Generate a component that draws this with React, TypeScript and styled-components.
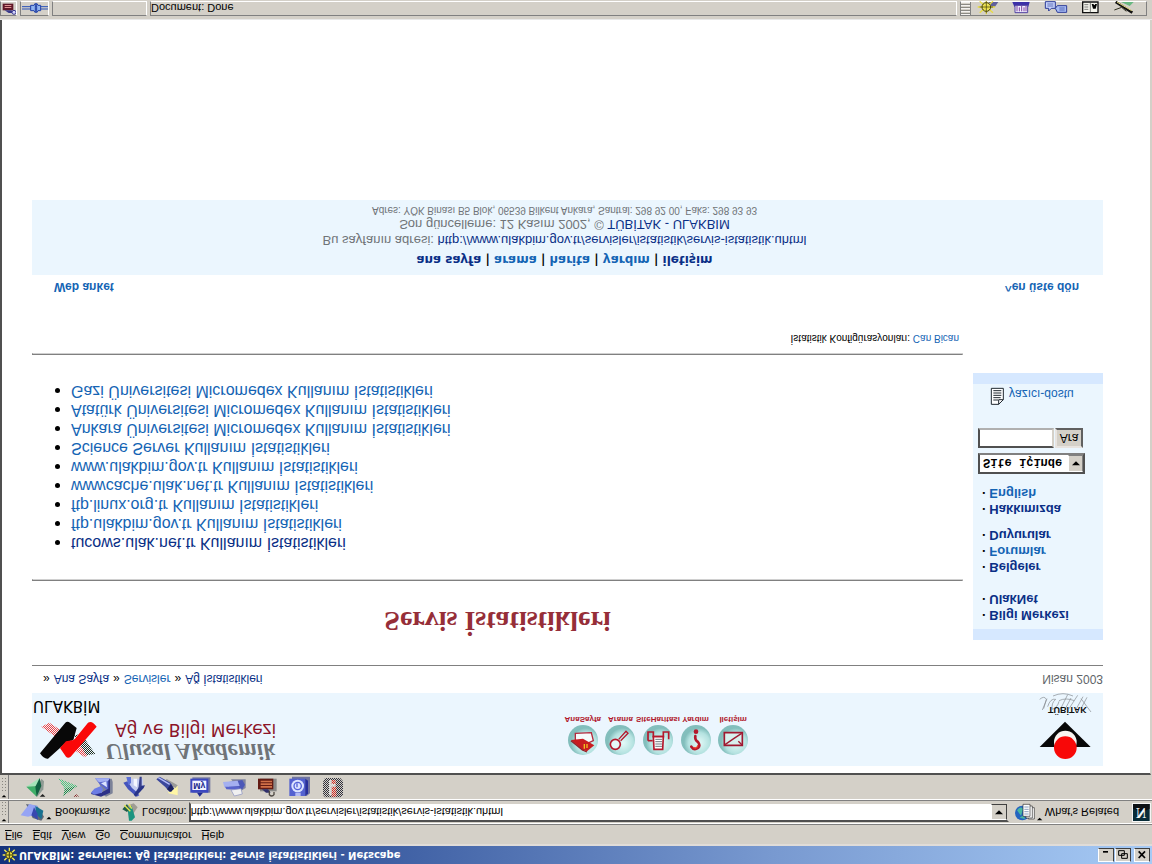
import React from 'react';
import styled, { createGlobalStyle } from 'styled-components';

const ui = '"Liberation Sans", Arial, sans-serif';
const wide = '"DejaVu Sans", Verdana, sans-serif';
const navy = '#0a2f86';
const blue = '#1464b4';
const face = '#d4d0c8';
const pale = '#ebf6fe';
const cap = '#d6e8ff';

const GlobalStyle = createGlobalStyle`
  * { box-sizing: border-box; }
  body { margin: 0; background: ${face}; font-family: ${ui}; font-size: 12px; color: #000; }
  a { text-decoration: none; color: ${navy}; }
  button, input, select { font-family: inherit; border-radius: 0; color: #000; }
`;

/* The whole window is shown mirrored top to bottom. */
const Window = styled.div`
  min-height: 100vh;
  display: flex;
  flex-direction: column;
  background: ${face};
  transform: scaleY(-1);
`;

const TitleBar = styled.header`
  display: flex;
  align-items: center;
  height: 18px;
  padding: 0 2px;
  gap: 2px;
  background: linear-gradient(90deg, #14327c, #3f60a4 34%, #7899d0 67%, #a6caf5);
`;

const Title = styled.h1`
  flex: 1;
  margin: 0;
  font: bold 10px/18px ${wide};
  color: #fff;
  white-space: nowrap;
`;

const CaptionButtons = styled.div`
  display: flex;
  gap: 1px;
`;

const CaptionButton = styled.button`
  display: flex;
  width: 16px;
  height: 14px;
  padding: 0;
  border: 1px solid;
  border-color: #fff #404040 #404040 #fff;
  background: ${face};
`;

const MenuBar = styled.nav`
  display: flex;
  align-items: center;
  height: 21px;
  padding: 0 0 3px 5px;
  gap: 10px;
  border-top: 2px solid #e0dcd8;
`;

const MenuButton = styled.button`
  padding: 0;
  border: 0;
  background: none;
  font-size: 11px;
  line-height: 14px;
  &::first-letter { text-decoration: underline; }
`;

const ToolRow = styled.div<{ $h: number }>`
  display: flex;
  align-items: center;
  height: ${p => p.$h}px;
  border-top: 1px solid #808080;
  box-shadow: inset 0 1px #fff;
`;

const GripBox = styled.span`
  align-self: stretch;
  width: 9px;
  margin-top: 1px;
  padding-top: 1px;
  border-right: 1px solid #808080;
`;

const GripDots = styled.span`
  display: block;
  height: 16px;
  margin: 2px 1px 0;
  background: radial-gradient(#87857f 30%, transparent 40%) 0 0 / 3px 3px;
`;

const IconButton = styled.button<{ $w: number }>`
  display: flex;
  align-items: center;
  justify-content: center;
  width: ${p => p.$w}px;
  padding: 0;
  border: 0;
  background: none;
`;

const BarLabel = styled.label`
  font-size: 11px;
  white-space: nowrap;
`;

const Spacer = styled.span<{ $w: number }>`
  flex: 0 0 ${p => p.$w}px;
`;

const Address = styled.div`
  flex: 1;
  display: flex;
  height: 20px;
  border: 2px solid;
  border-color: #505050 #d4d0c8 #d4d0c8 #505050;
  background: #fff;
`;

const AddressInput = styled.input`
  flex: 1;
  min-width: 0;
  padding: 0;
  border: 0;
  outline: 0;
  background: none;
  font-size: 11px;
`;

const DropButton = styled.button`
  display: flex;
  align-items: center;
  justify-content: center;
  width: 16px;
  padding: 0;
  border: 1px solid;
  border-color: #fff #404040 #404040 #fff;
  background: ${face};
`;

const Viewport = styled.main`
  flex: 1;
  margin-right: 1px;
  padding: 7px 47px 20px 30px;
  border-top: 2px solid #505050;
  border-left: 2px solid #505050;
  border-right: 1px solid #d4d0c8;
  background: #fff;
`;

const Banner = styled.section`
  display: grid;
  grid-template-columns: 1fr 188px 351px;
  height: 73px;
  background: ${pale};
`;

const Brand = styled.div`
  display: grid;
  grid-template-columns: 73px 1fr;
  grid-template-rows: 50px 20px;
  align-content: start;
`;

const BrandMark = styled.div`
  padding: 6px 0 0 7px;
`;

const BrandText = styled.div`
  padding-top: 4px;
  white-space: nowrap;
`;

const Script = styled.div`
  font: italic bold 24px/20px "Liberation Serif", serif;
  color: #707478;
`;

const Centre = styled.div`
  padding-left: 10px;
  font: 17px/24px ${wide};
  color: #8c1428;
`;

const Acronym = styled.div`
  grid-column: 1 / 3;
  padding-left: 1px;
  font: 15px/20px ${wide};
`;

const QuickNav = styled.nav`
  display: grid;
  grid-template-columns: repeat(5, minmax(0, 1fr));
  padding-top: 10px;
  align-content: start;
`;

const QuickLink = styled.a`
  display: flex;
  flex-direction: column;
  align-items: center;
  font: bold 8px/10px ${ui};
  && { color: #b0182c; }
  white-space: nowrap;
`;

const Institute = styled.div`
  display: flex;
  justify-content: flex-end;
  padding: 6px 9px 0 0;
`;

const Crumbs = styled.nav`
  display: flex;
  justify-content: space-between;
  height: 28px;
  padding-left: 11px;
  line-height: 28px;
  border-bottom: 1px solid #808080;
`;

const Trail = styled.span`
  display: flex;
  gap: 4px;
`;

const Month = styled.span`
  color: #606468;
`;

const Text = styled.a<{ $c?: string }>`
  color: ${p => p.$c || navy};
`;

const Columns = styled.div`
  display: grid;
  grid-template-columns: 1fr 130px;
  gap: 10px;
`;

const Article = styled.article`
  min-width: 0;
`;

const Heading = styled.h2`
  margin: 29px 0 25px;
  font: bold 28px/30px "Liberation Serif", serif;
  text-align: center;
  color: #962e38;
`;

const Rule = styled.hr`
  margin: 0;
  border: 1px solid;
  border-color: #808080 #d0d0d0 #d0d0d0 #808080;
`;

const Stats = styled.ul`
  margin: 26px 0 27px;
  padding-left: 39px;
  font-size: 16px;
  line-height: 19px;
`;

const Item = styled.li`
  &::marker { color: #000; }
`;

const Config = styled.p`
  margin: 8px 4px 0 0;
  font-size: 10px;
  line-height: 14px;
  text-align: right;
`;

const Side = styled.aside`
  align-self: start;
  margin-top: 25px;
  height: 267px;
  border-top: 11px solid ${cap};
  border-bottom: 11px solid ${cap};
  background: ${pale};
`;

const SideList = styled.ul<{ $gap: number }>`
  margin: ${p => p.$gap}px 0 0;
  padding: 0 0 0 9px;
  list-style: none;
  font-weight: bold;
  font-size: 13px;
  line-height: 16px;
`;

const SideItem = styled.li`
  display: flex;
  gap: 3px;
`;

const SearchForm = styled.form`
  display: grid;
  grid-template-columns: 76px 28px;
  gap: 5px 1px;
  margin: 11px 0 0 5px;
`;

const SelectBox = styled.div`
  grid-column: 1 / 3;
  width: 107px;
  height: 21px;
  display: grid;
  grid-template-columns: 1fr 15px;
  border: 2px solid;
  border-color: #505050 #505050 #808080 #505050;
  background: #fff;
`;

const Select = styled.select`
  grid-area: 1 / 1 / 2 / 3;
  appearance: none;
  padding: 3px 0 0 3px;
  border: 0;
  background: none;
  font: bold 12px/14px "Liberation Mono", monospace;
`;

const SelectArrow = styled.span`
  grid-area: 1 / 2;
  display: flex;
  align-items: center;
  justify-content: center;
  border: 1px solid;
  border-color: #fff #808080 #808080 #fff;
  background: ${face};
  pointer-events: none;
`;

const Field = styled.input`
  min-width: 0;
  width: 100%;
  height: 20px;
  border: 2px solid;
  border-color: #505050 #d4d0c8 #b0b0b0 #505050;
  background: #fff;
`;

const Submit = styled.button`
  height: 20px;
  padding: 0;
  border: 2px solid;
  border-color: #e8e4e0 #606060 #606060 #e8e4e0;
  background: ${face};
  font-size: 12px;
`;

const Printable = styled.a`
  display: flex;
  gap: 4px;
  margin: 22px 0 0 17px;
  line-height: 24px;
  && { color: ${blue}; }
`;

const Jump = styled.nav`
  display: flex;
  justify-content: space-between;
  margin-top: 37px;
  padding: 0 24px 0 22px;
  font-weight: bold;
  line-height: 14px;
`;

const Footer = styled.footer`
  margin-top: 5px;
  height: 75px;
  padding: 7px 6px 0 0;
  background: ${pale};
  text-align: center;
  color: #707478;
`;

const FootNav = styled.nav`
  margin-bottom: 4px;
  font: bold 12px/16px ${wide};
  color: #000;
`;

const FootLine = styled.div<{ $s: number; $h: number }>`
  font-size: ${p => p.$s}px;
  line-height: ${p => p.$h}px;
`;

const StatusBar = styled.footer`
  display: flex;
  gap: 3px;
  height: 20px;
  padding: 3px 5px 1px 0;
  border-top: 1px solid #e8e8e8;
`;

const Panel = styled.div<{ $w?: number }>`
  flex: ${p => (p.$w ? `0 0 ${p.$w}px` : '1')};
  display: flex;
  align-items: center;
  overflow: hidden;
  border: 1px solid;
  border-color: #808080 #fff #fff #808080;
  font-size: 11px;
`;

const Tray = styled.div`
  display: flex;
  align-items: center;
  width: 187px;
  border: 1px solid;
  border-color: #808080 #808080 #fff #808080;
`;

const TrayGrip = styled.span`
  align-self: stretch;
  width: 10px;
  background: repeating-linear-gradient(#f4f2f0 0 1px, #8c8a84 1px 2px, ${face} 2px 3px);
  border-right: 1px solid #808080;
`;

const Art = styled.svg`
  display: block;
  flex: none;
`;

type GlyphProps = { x: number; y: number; w: number; h: number; children: React.ReactNode };

/* Artwork on a grid three units to the pixel, with y counted upwards. */
function Glyph({ x, y, w, h, children }: GlyphProps) {
  return (
    <Art width={Math.round(w / 3)} height={Math.round(h / 3)} viewBox={`${x} ${y} ${w} ${h}`} aria-hidden="true">
      <defs>
        <pattern id="dither" width="6" height="6" patternUnits="userSpaceOnUse">
          <path d="M0 0h3v3h-3zM3 3h3v3h-3z" fill={face} />
        </pattern>
        <pattern id="ditherPale" width="6" height="6" patternUnits="userSpaceOnUse">
          <path d="M0 0h3v3h-3zM3 3h3v3h-3z" fill={pale} />
        </pattern>
        <radialGradient id="bubble" cx="0.6" cy="0.6">
          <stop offset="0" stopColor="#e4faf8" />
          <stop offset="0.7" stopColor="#b4e2e0" />
          <stop offset="1" stopColor="#82bebc" />
        </radialGradient>
      </defs>
      <g transform={`translate(0 ${2 * y + h}) scale(1 -1)`}>{children}</g>
    </Art>
  );
}

const Down = () => (
  <Glyph x={0} y={0} w={24} h={15}>
    <path d="M0 13h24L12 1z" fill="#000" />
  </Glyph>
);

const Grip = () => (
  <GripBox>
    <Glyph x={0} y={0} w={24} h={12}>
      <path d="M5 10h14L12 3z" fill="#000" />
    </Glyph>
    <GripDots />
  </GripBox>
);

const tools: { name: string; x: number; art: React.ReactNode }[] = [
  {
    name: 'Back', x: 72, art: <>
      <path d="M124 20l8 8-2 24-18 22-6-4z" fill="#8f9a94" />
      <path d="M79 44l40-26-7 24z" fill="#a4e4b8" />
      <path d="M79 44l33-2-2 32z" fill="#3fae68" />
      <path d="M119 18l5 24-14 32-4-30z" fill="#106040" />
      <path d="M119 74h17l-8-8z" fill="#202020" />
    </>,
  },
  {
    name: 'Forward', x: 168, art: <>
      <path d="M173 20l56 22-42 30 4-22z" fill="#148c4c" />
      <path d="M173 20l56 22-38 8z" fill="#4cc884" />
      <path d="M216 74h18l-9-8z" fill="#802020" />
      <path d="M168 12h72v70h-72z" fill="url(#dither)" />
    </>,
  },
  {
    name: 'Reload', x: 267, art: <>
      <path d="M290 20h42l3 10v34l-20 10-8-6z" fill="#7c8298" />
      <path d="M282 19h44v30l-10 4-12-10-8-6z" fill="#5c68cc" />
      <path d="M282 19h44l-4 8-28 4z" fill="#a4b0f4" />
      <path d="M322 26l5-6v42l-27 12-30-8 4-8 26 4 22-12z" fill="#2c3088" />
      <path d="M270 62l10-12 20-8 6 10-4 10-22 6z" fill="#6c7ce4" />
      <path d="M300 34l16-6 2 18z" fill="#dce4ff" />
    </>,
  },
  {
    name: 'Home', x: 366, art: <>
      <path d="M384 20h42v26l-20 22-24-20z" fill="#c4ccf0" />
      <path d="M367 32l12-4 14 20 14 12 8 10-8 4-26-22z" fill="#4454bc" />
      <path d="M432 40l-4 8-24 26-6-6 18-26z" fill="#283488" />
      <path d="M376 15h14v18l-8 6z" fill="#5c70d8" />
      <path d="M398 20h10v26l-10-6z" fill="#f4f6ff" />
      <path d="M416 14h6v28l-10 10z" fill="#38408c" />
    </>,
  },
  {
    name: 'Search', x: 465, art: <>
      <path d="M506 40l24 2v28l-28-6z" fill="#fff6a4" />
      <path d="M496 20l34 20-6 8-30-12z" fill="#9a9a98" />
      <path d="M466 22l10-8 32 18 12 18-14 10-14-16z" fill="#3c489c" />
      <path d="M472 17l34 20" stroke="#b4bcf8" strokeWidth="4" />
      <path d="M498 52l12-16 8 14-8 10z" fill="#1c2260" />
    </>,
  },
  {
    name: 'My Netscape', x: 564, art: <>
      <path d="M574 16h54v46h-54z" fill="#7478a0" />
      <path d="M568 20h54v42h-54z" fill="#3c48c0" />
      <path d="M574 26h42v28h-42z" fill="#f2f4ff" />
      <path d="M588 62h18l-10 12z" fill="#202a90" />
      <text transform="translate(577 32) scale(1 -1)" fontSize="26" fontWeight="bold" fontFamily="Liberation Sans, sans-serif" fill="#20288c">My</text>
    </>,
  },
  {
    name: 'Print', x: 663, art: <>
      <path d="M690 22h44v26l-16 10z" fill="#8084a0" />
      <path d="M684 30l40-6 8 14-8 14-40-4z" fill="#4c58b8" />
      <path d="M666 30l44-4 6 16-46 4z" fill="#a4b0f0" />
      <path d="M672 44h42l2 10-40-2z" fill="#5864cc" />
      <path d="M690 54l30-4 4 16-24 6z" fill="#f0f0f0" stroke="#8890c0" strokeWidth="2" />
    </>,
  },
  {
    name: 'Security', x: 765, art: <>
      <path d="M780 20h50v38h-50z" fill="#8a8a88" />
      <path d="M774 20h46v32h-46z" fill="#641c14" />
      <path d="M782 26h34v5h-34zM782 34h34v5h-34zM782 42h34v5h-34z" fill="#d07048" />
      <path d="M786 52h18l8 10h-14z" fill="#30306c" />
      <path d="M808 56v12q8 8 14 0v-8" fill="none" stroke="#504a44" strokeWidth="4" />
    </>,
  },
  {
    name: 'Shop', x: 858, art: <>
      <path d="M870 14h54v50l-10 8h-44z" fill="#7074a0" />
      <path d="M862 20h48v52h-48z" fill="#5462d0" />
      <path d="M910 20l8 6v38l-8 8z" fill="#28309c" />
      <circle cx="887" cy="42" r="19" fill="#dce4ff" />
      <circle cx="887" cy="42" r="11" fill="none" stroke="#5464d8" strokeWidth="4" />
      <path d="M885 34v12" stroke="#5464d8" strokeWidth="4" />
      <path d="M880 62h16v10h-16z" fill="#b4bcf4" />
    </>,
  },
  {
    name: 'Stop', x: 960, art: <>
      <path d="M972 18h46l8 10v40l-8 8h-46l-6-8v-38z" fill="#30303c" />
      <path d="M984 24h20v46h-20z" fill="#dce0e4" />
      <path d="M992 24h12v12h-12zM992 44h14v30h-14z" fill="#d82820" />
      <path d="M960 12h72v70h-72z" fill="url(#dither)" />
    </>,
  },
];

const quick: { label: string; x: number; art: React.ReactNode }[] = [
  {
    label: 'AnaSayfa', x: 126, art: <>
      <path d="M103 130l48-2 6 24-30 14-24-16z" fill="#f4fbfb" stroke="#b4283c" strokeWidth="4" />
      <path d="M90 150l36-4 34 20-22 18-14-4z" fill="#c81c20" />
      <path d="M90 152l34 28 14 6" stroke="#902028" strokeWidth="4" fill="none" />
      <path d="M130 162v14M138 162v12" stroke="#f0c020" strokeWidth="4" />
    </>,
  },
  {
    label: 'Arama', x: 240, art: <>
      <circle cx="226" cy="163" r="15" fill="#e4f8f8" stroke="#b4182c" strokeWidth="5" />
      <path d="M236 148l22-24 6 6-22 22" fill="none" stroke="#b4182c" strokeWidth="4" />
    </>,
  },
  {
    label: 'SiteHaritası', x: 352, art: <>
      <path d="M322 152v-26h16v14h30v-14h16v22" fill="none" stroke="#b4182c" strokeWidth="5" />
      <path d="M322 152h14" fill="none" stroke="#b4182c" strokeWidth="5" />
      <path d="M338 140h30l-2 38h-26z" fill="#fff" stroke="#b4182c" strokeWidth="5" />
      <path d="M344 148h20M344 155h20M344 162h20M344 169h20" stroke="#707880" strokeWidth="3" />
    </>,
  },
  {
    label: 'Yardım', x: 466, art: <>
      <circle cx="466" cy="125" r="7" fill="#b4182c" />
      <path d="M464 138q-2 12 8 18 8 10 0 18-12 8-20-4" fill="none" stroke="#b4182c" strokeWidth="8" strokeLinecap="round" />
      <path d="M458 172q10 6 14-6" stroke="#f03c28" strokeWidth="4" fill="none" />
    </>,
  },
  {
    label: 'İletişim', x: 580, art: <>
      <path d="M554 128h54v38h-54z" fill="#d8f0ee" stroke="#a01830" strokeWidth="5" />
      <path d="M556 164l26-18 24-16M596 154l12 12" stroke="#a01830" strokeWidth="4" fill="none" />
    </>,
  },
];

const stats = [
  'tucows.ulak.net.tr Kullanım İstatistikleri',
  'ftp.ulakbim.gov.tr Kullanım İstatistikleri',
  'ftp.linux.org.tr Kullanım İstatistikleri',
  'wwwcache.ulak.net.tr Kullanım İstatistikleri',
  'www.ulakbim.gov.tr Kullanım İstatistikleri',
  'Science Server Kullanım İstatistikleri',
  'Ankara Üniversitesi Micromedex Kullanım İstatistikleri',
  'Atatürk Üniversitesi Micromedex Kullanım İstatistikleri',
  'Gazi Üniversitesi Micromedex Kullanım İstatistikleri',
];

const sideGroups: { gap: number; items: [string, string][] }[] = [
  { gap: 6, items: [['Bilgi Merkezi', navy], ['UlakNet', navy]] },
  { gap: 16, items: [['Belgeler', navy], ['Forumlar', blue], ['Duyurular', navy]] },
  { gap: 10, items: [['Hakkımızda', navy], ['English', blue]] },
];

const footLinks: [string, string][] = [
  ['ana sayfa', navy], ['arama', blue], ['harita', blue], ['yardım', blue], ['iletişim', navy],
];

function SunIcon() {
  return (
    <Glyph x={6} y={226} w={45} h={48}>
      <path d="M28 228v44M8 250h42M13 234l31 32M44 234l-31 32" stroke="#f4ec50" strokeWidth="4" />
      <circle cx="28" cy="250" r="11" fill="#e8dc40" stroke="#3c3c10" strokeWidth="3" />
      <path d="M28 240v20M18 250h20" stroke="#3c3c10" strokeWidth="3" />
    </Glyph>
  );
}

function Tubitak() {
  return (
    <Glyph x={234} y={366} w={171} h={204}>
      <path d="M242 388q14-12 20 0l-8 28M264 386l-14 34M266 410q8-26 24-22-14 12-10 30 16-6 20-24M282 378q30-14 60 0M304 418l22-44M318 418l18-34M330 416l26-40M350 420l22-40M366 386l30 40M384 382l-16 30M300 392q20-10 46 0" stroke="#84888c" strokeWidth="2" fill="none" />
      <text transform="translate(267 411) scale(1 -1)" fontSize="27" fontWeight="bold" fontFamily="Liberation Sans, sans-serif" fill="#101010">TÜBİTAK</text>
      <path d="M318 455l77 76H242z" fill="#080808" />
      <circle cx="319" cy="516" r="34" fill="#f8f4f0" />
      <circle cx="319" cy="533" r="34" fill="#f80808" />
    </Glyph>
  );
}

export default function App() {
  return (
    <>
      <GlobalStyle />
      <Window>
        <TitleBar>
          <SunIcon />
          <Title>ULAKBİM: Servisler: Ağ İstatistikleri: Servis İstatistikleri - Netscape</Title>
          <CaptionButtons>
            <CaptionButton aria-label="Minimize">
              <Glyph x={0} y={0} w={42} h={36}><path d="M12 6h15v5h-15z" /></Glyph>
            </CaptionButton>
            <CaptionButton aria-label="Restore">
              <Glyph x={0} y={0} w={42} h={36}><path d="M17 14h17v14h-17zM8 5h17v14h-17z" fill="none" stroke="#000" strokeWidth="3" /></Glyph>
            </CaptionButton>
            <Spacer $w={1} />
            <CaptionButton aria-label="Close">
              <Glyph x={0} y={0} w={42} h={36}><path d="M11 7l19 20M30 7l-19 20" stroke="#000" strokeWidth="5" /></Glyph>
            </CaptionButton>
          </CaptionButtons>
        </TitleBar>

        <MenuBar>
          {['File', 'Edit', 'View', 'Go', 'Communicator', 'Help'].map(m => <MenuButton key={m}>{m}</MenuButton>)}
        </MenuBar>

        <ToolRow $h={24}>
          <Grip />
          <Spacer $w={11} />
          <Glyph x={62} y={94} w={96} h={60}>
            <path d="M80 100l34 6 20 32-8 12-26-8z" fill="#606878" />
            <path d="M64 134l26-34 26 6-14 28-16 4z" fill="#96a4f4" />
            <path d="M108 106l24 14-6 26-16-16z" fill="#187090" />
            <path d="M104 110l-8 24 20 14-2-20z" fill="#3848b0" />
            <path d="M141 146h15l-7-8z" />
          </Glyph>
          <Spacer $w={3} />
          <BarLabel as="span">Bookmarks</BarLabel>
          <Spacer $w={11} />
          <Glyph x={360} y={94} w={51} h={60}>
            <path d="M376 106l22-8 12 12-14 20z" fill="#a09c94" />
            <path d="M380 116l12-10 10 34-10 10h-8z" fill="#1c9480" />
            <path d="M364 116l14-16 8 16-8 8z" fill="#205c48" />
            <path d="M370 104l18 18M384 100l8 14" stroke="#e8e850" strokeWidth="4" />
          </Glyph>
          <Spacer $w={4} />
          <BarLabel htmlFor="address">Location:</BarLabel>
          <Spacer $w={2} />
          <Address>
            <AddressInput id="address" defaultValue="http://www.ulakbim.gov.tr/servisler/istatistik/servis-istatistik.uhtml" />
            <DropButton aria-label="Show addresses"><Down /></DropButton>
          </Address>
          <Spacer $w={6} />
          <Glyph x={738} y={96} w={84} h={57}>
            <circle cx="760" cy="126" r="22" fill="#2464c0" />
            <path d="M744 118q10-14 18-4l-6 20zM752 140l12-8 4 12z" fill="#48b8a0" />
            <path d="M778 110h18v34h-18z" fill="#fff" stroke="#303030" strokeWidth="2" />
            <path d="M771 105h19v36h-19z" fill="#fff" stroke="#303030" strokeWidth="2" />
            <path d="M762 100h21v36h-21z" fill="#fff" stroke="#303030" strokeWidth="2" />
            <path d="M766 108h13M766 115h13M766 122h13M766 129h13" stroke="#5070a0" strokeWidth="2" />
            <path d="M804 148h16l-8-8z" />
          </Glyph>
          <Spacer $w={2} />
          <BarLabel as="span">What's Related</BarLabel>
          <Spacer $w={13} />
          <Glyph x={1092} y={96} w={60} h={57}>
            <path d="M1092 96h57v57h-57z" fill="#f4f4f4" />
            <path d="M1095 99h50v51h-50z" fill="#082c38" />
            <path d="M1095 99h50v14q-25 14-50 0z" fill="#0c1014" />
            <text transform="translate(1104 110) scale(1 -1)" fontSize="42" fontWeight="bold" fontFamily="Liberation Serif, serif" fill="#f4f8f8">N</text>
          </Glyph>
        </ToolRow>

        <ToolRow $h={26}>
          <Grip />
          <Spacer $w={10} />
          {tools.map(t => (
            <IconButton key={t.name} aria-label={t.name} $w={33}>
              <Glyph x={t.x} y={12} w={72} h={69}>{t.art}</Glyph>
            </IconButton>
          ))}
        </ToolRow>

        <Viewport>
          <Banner>
            <Brand>
              <BrandMark>
                <Glyph x={117} y={180} w={177} h={120}>
                  <path d="M124 200l24-12 130 84-24 20z" fill="#f04040" />
                  <path d="M222 226l22-4 42 60-26 4z" fill="#203020" />
                  <path d="M117 180h177v120h-177z" fill="url(#ditherPale)" />
                  <path d="M120 280l76-92q6-6 14 0l20 16-10 36-20 6-56 50q-12 2-24-16z" fill="#080808" />
                  <path d="M180 264l18-20 24-4 42-52q12-8 26 12l-78 90q-8 6-14 0z" fill="#fa0808" />
                </Glyph>
              </BrandMark>
              <BrandText>
                <Script>Ulusal Akademik</Script>
                <Centre>Ağ ve Bilgi Merkezi</Centre>
              </BrandText>
              <Acronym>ULAKBİM</Acronym>
            </Brand>
            <QuickNav>
              {quick.map(q => (
                <QuickLink key={q.label} href="#">
                  <Glyph x={q.x - 48} y={102} w={96} h={96}>
                    <circle cx={q.x} cy="150" r="45" fill="url(#bubble)" />
                    {q.art}
                  </Glyph>
                  {q.label}
                </QuickLink>
              ))}
            </QuickNav>
            <Institute><Tubitak /></Institute>
          </Banner>

          <Crumbs>
            <Trail>
              <span>»</span><Text href="#">Ana Sayfa</Text>
              <span>»</span><Text href="#" $c={blue}>Servisler</Text>
              <span>»</span><Text href="#">Ağ İstatistikleri</Text>
            </Trail>
            <Month>Nisan 2003</Month>
          </Crumbs>

          <Columns>
            <Article>
              <Heading>Servis İstatistikleri</Heading>
              <Rule />
              <Stats>
                {stats.map((s, i) => <Item key={s}><Text href="#" $c={i ? blue : navy}>{s}</Text></Item>)}
              </Stats>
              <Rule />
              <Config>İstatistik Konfigürasyonları: <Text href="#" $c={blue}>Can Bican</Text></Config>
            </Article>
            <Side>
              {sideGroups.map(g => (
                <SideList key={g.gap} $gap={g.gap}>
                  {g.items.map(([t, c]) => <SideItem key={t}><span>·</span><Text href="#" $c={c}>{t}</Text></SideItem>)}
                </SideList>
              ))}
              <SearchForm>
                <SelectBox>
                  <Select aria-label="Arama alanı"><option>Site içinde</option></Select>
                  <SelectArrow><Down /></SelectArrow>
                </SelectBox>
                <Field type="text" aria-label="Aranacak" />
                <Submit type="button">Ara</Submit>
              </SearchForm>
              <Printable href="#">
                <Glyph x={90} y={90} w={45} h={57}>
                  <path d="M94 94h36v34l-14 14h-22z" fill="#fff" stroke="#202830" strokeWidth="3" />
                  <path d="M100 101h24M100 108h24M100 115h24M100 122h22M100 129h14M116 142v-14h14" fill="none" stroke="#202830" strokeWidth="3" />
                </Glyph>
                yazıcı-dostu
              </Printable>
            </Side>
          </Columns>

          <Jump>
            <Text href="#" $c={blue}>Web anket</Text>
            <Text href="#" $c={blue}>^en üste dön</Text>
          </Jump>

          <Footer>
            <FootNav>
              {footLinks.map(([t, c], i) => <React.Fragment key={t}>{i > 0 && ' | '}<Text href="#" $c={c}>{t}</Text></React.Fragment>)}
            </FootNav>
            <FootLine $s={13} $h={16}>Bu sayfanın adresi: <Text href="#">http://www.ulakbim.gov.tr/servisler/istatistik/servis-istatistik.uhtml</Text></FootLine>
            <FootLine $s={13} $h={15}>Son güncelleme: 12 Kasım 2002, © <Text href="#">TÜBİTAK - ULAKBIM</Text></FootLine>
            <FootLine $s={10} $h={14}>Adres: YÖK Binası B5 Blok, 06539 Bilkent Ankara, Santral: 298 92 00, Faks: 298 93 93</FootLine>
          </Footer>
        </Viewport>

        <StatusBar>
          <Panel $w={17}>
            <Glyph x={3} y={0} w={48} h={45}>
              <path d="M8 8h32v20h-32z" fill="#601828" />
              <path d="M14 12h20v3h-20zM14 18h20v3h-20z" fill="#e09090" />
              <path d="M14 28h20l10 8h-18z" fill="#38388c" />
              <circle cx="42" cy="34" r="6" fill="#d0d0f8" stroke="#383890" strokeWidth="3" />
            </Glyph>
          </Panel>
          <Panel $w={29}>
            <Glyph x={63} y={3} w={84} h={42}>
              <path d="M66 20h78M66 27h78" stroke="#2850b8" strokeWidth="3" />
              <path d="M92 16h10l4-6v28l-4-6h-10zM122 16h-8l-4-6v28l4-6h8z" fill="#90b4f0" stroke="#2040a8" strokeWidth="3" />
            </Glyph>
          </Panel>
          <Panel $w={95} />
          <Panel>Document: Done</Panel>
          <Tray>
            <TrayGrip />
            <IconButton $w={34} aria-label="Navigator">
              <Glyph x={114} y={3} w={66} h={42}>
                <path d="M148 6h30l-10 14-14 4z" fill="#60609c" />
                <circle cx="142" cy="21" r="15" fill="#f0e870" />
                <path d="M142 3v40M116 21h52M122 4l40 34M162 4l-40 34" stroke="#e8dc40" strokeWidth="4" />
                <circle cx="142" cy="21" r="13" fill="none" stroke="#403c10" strokeWidth="3" />
                <path d="M142 4v36M122 21h40" stroke="#403c10" strokeWidth="2" />
              </Glyph>
            </IconButton>
            <IconButton $w={34} aria-label="Inbox">
              <Glyph x={218} y={3} w={66} h={42}>
                <path d="M222 6h52l-4 14h-42z" fill="#3c30a8" />
                <path d="M230 16h38v22h-38z" fill="#f0f0ff" stroke="#5040a0" strokeWidth="3" />
                <path d="M236 18v16M243 22v12M250 18v16M257 22v12M263 18v16" stroke="#8040a0" strokeWidth="3" fill="none" />
              </Glyph>
            </IconButton>
            <IconButton $w={34} aria-label="Newsgroups">
              <Glyph x={314} y={3} w={72} h={42}>
                <path d="M318 5h30v20h-12l-8 8v-8h-10z" fill="#c8d4fc" stroke="#2c3c98" strokeWidth="3" />
                <path d="M354 17h28v20h-28l-6-12z" fill="#a8bcf4" stroke="#2c3c98" strokeWidth="3" />
                <path d="M324 12h18M324 18h18M360 24h16M360 30h16" stroke="#2c3c98" strokeWidth="2" />
              </Glyph>
            </IconButton>
            <IconButton $w={34} aria-label="Address Book">
              <Glyph x={420} y={3} w={60} h={42}>
                <path d="M428 6h46v32h-46z" fill="#f4f4ec" stroke="#101010" strokeWidth="4" />
                <path d="M433 14h12M433 21h12M433 28h12M451 6v32" stroke="#404040" strokeWidth="2" />
                <path d="M455 12h5l3 4 3-4h5l-4 14h-8z" />
              </Glyph>
            </IconButton>
            <IconButton $w={34} aria-label="Composer">
              <Glyph x={522} y={3} w={66} h={42}>
                <path d="M546 6h38l-12 12z" fill="#68b880" />
                <path d="M530 6l50 32" stroke="#101010" strokeWidth="8" />
                <path d="M534 6l44 26" stroke="#e8e080" strokeWidth="3" />
                <path d="M526 30l22-8 14 12" stroke="#303020" strokeWidth="3" fill="none" />
              </Glyph>
            </IconButton>
          </Tray>
        </StatusBar>
      </Window>
    </>
  );
}
